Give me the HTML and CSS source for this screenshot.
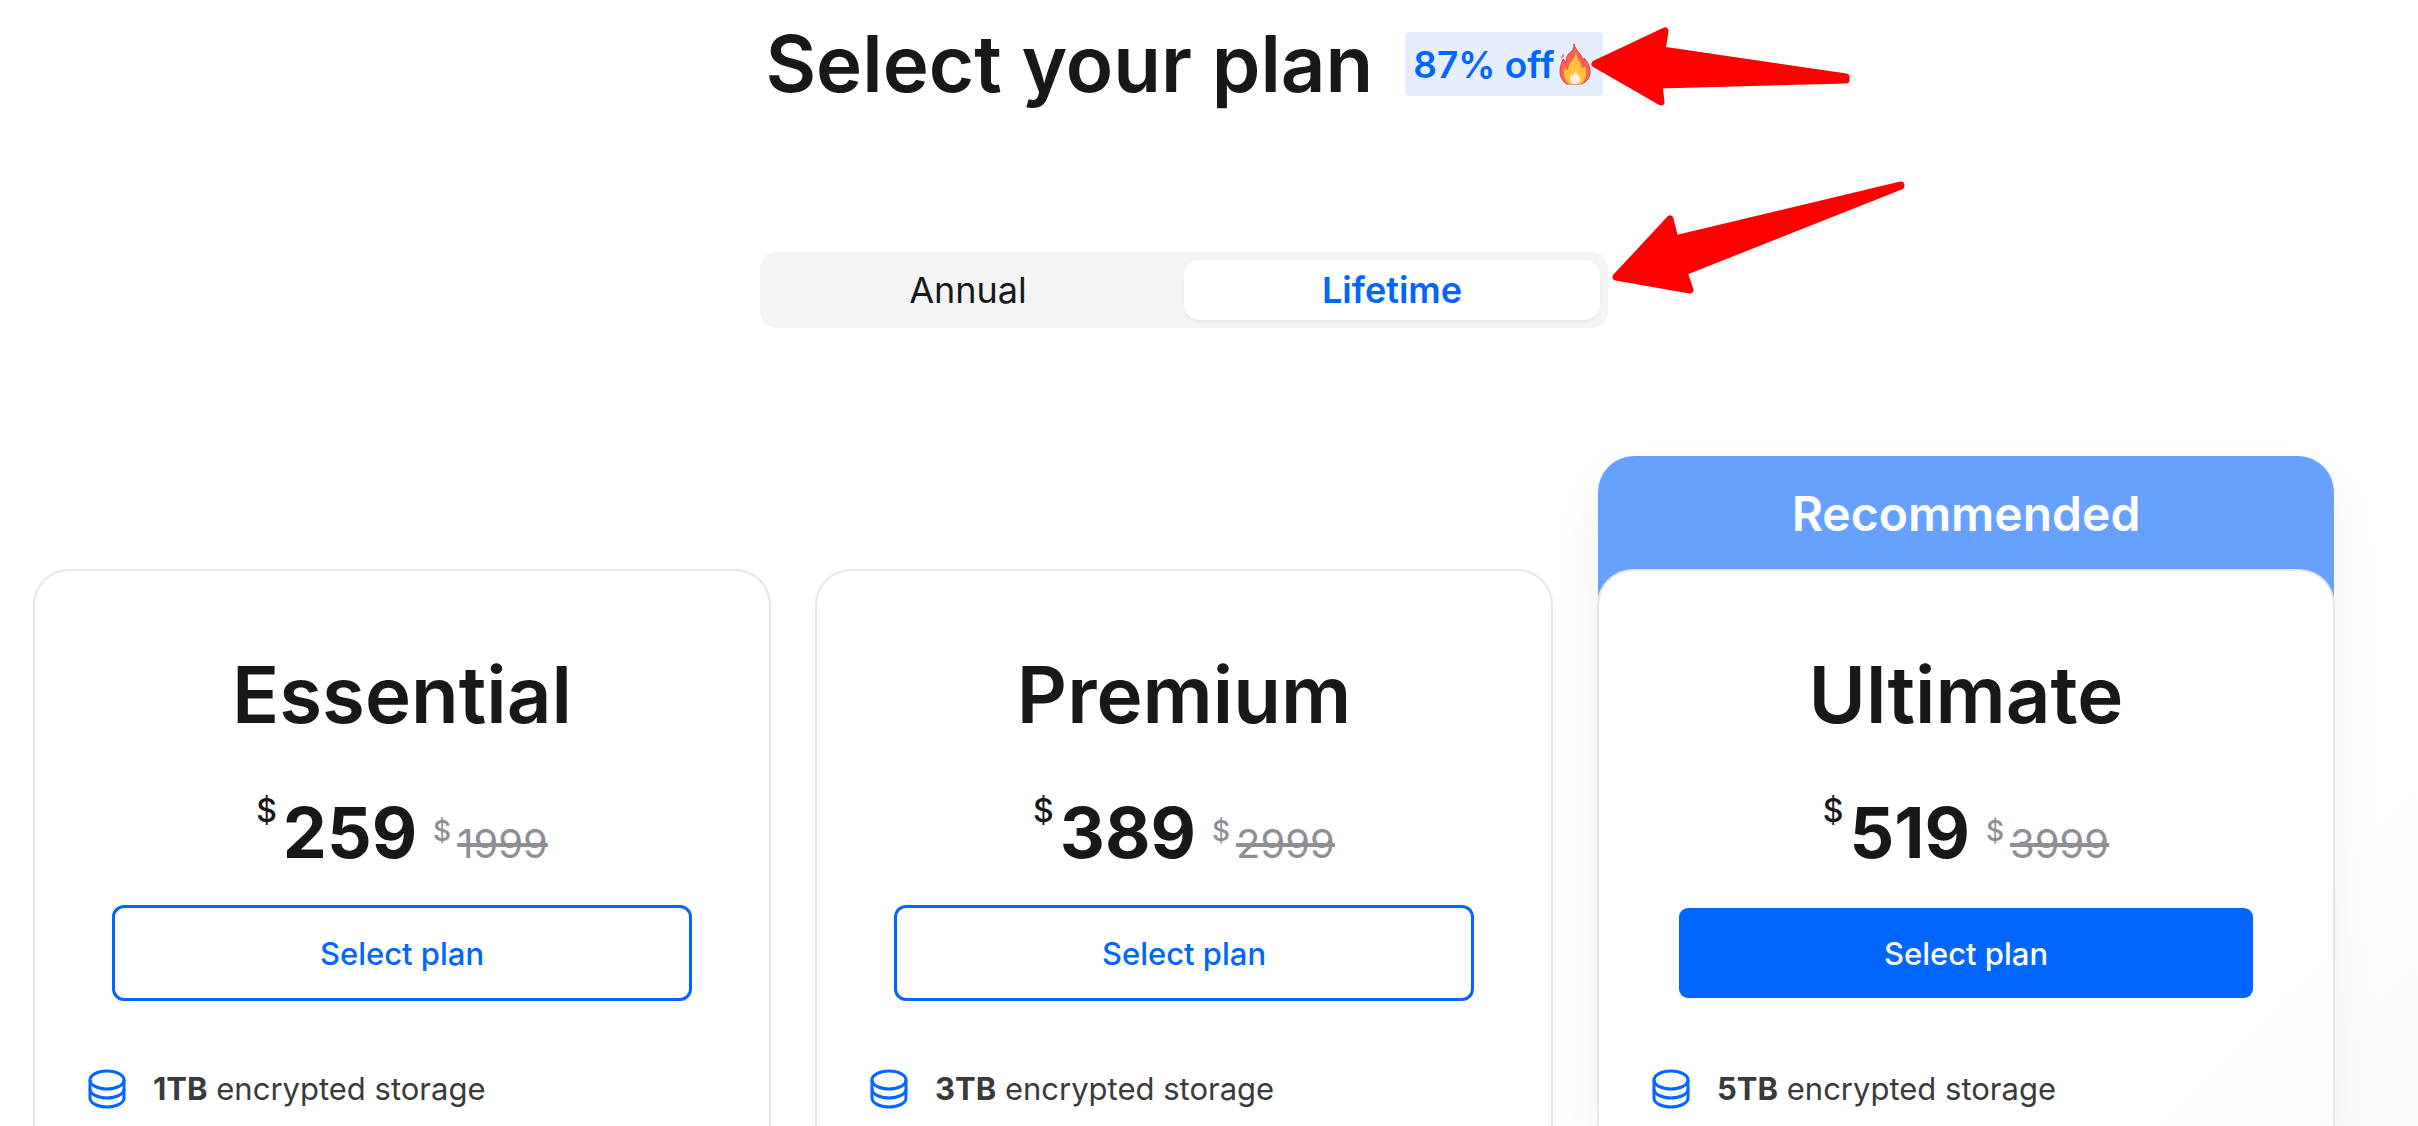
FILE: index.html
```html
<!DOCTYPE html>
<html lang="en">
<head>
    <meta charset="UTF-8">
    <meta name="viewport" content="width=device-width, initial-scale=1.0">
    <title>Select your plan</title>
    <link rel="stylesheet" href="styles.css">
</head>
<body>

    <!-- Shared icon -->
    <svg class="sprite" aria-hidden="true">
        <symbol id="icon-storage" viewBox="0 0 48 48">
            <g fill="none" stroke="currentColor" stroke-width="3">
                <ellipse cx="24" cy="15" rx="17" ry="9"/>
                <path d="M7 15v18c0 5 7.600 9 17 9s17-4 17-9V15"/>
                <path d="M7 24c0 5 7.600 9 17 9s17-4 17-9"/>
            </g>
        </symbol>
    </svg>

    <main class="page">
        <header class="page-header">
            <h1>Select your plan</h1>
            <div class="badge">
                <span>87% off</span>
                <svg class="fire" viewBox="0 0 32 42" aria-hidden="true">
                    <path fill="#ff6250" stroke="#e3342b" stroke-width="1" d="M15 1c1 7 9 10 9 18 0 2 1 1 1-4 4 4 6 9 6 14 0 7-5 11-9 12H8C4 39 1 34 1 28c0-5 2-8 3-12l3 4c0-7 3-10 6-12 2-2 2-5 2-7z"/>
                    <path fill="#ff6250" d="M5 10c-2 2-3 4-3 6 2-1 3-3 3-6z"/>
                    <path fill="#ffc23c" d="M17 9c0 7 6 10 6 17l3-3c3 8 0 15-4 18H10c-5-4-6-11-4-16l3 3c0-9 8-12 8-19z"/>
                    <path fill="#f3f0ec" d="M16 28c1 3 5 4 5 8 0 3-2 5-5 5s-5-2-5-5c0-2 1-4 2-5l1 2c1-1 2-3 2-5z"/>
                </svg>
                <svg class="arrow arrow-badge" viewBox="0 0 262 82" aria-hidden="true">
                    <path d="M6 38L76 5l-3 19 184 27v3L70 59l2 17z"/>
                </svg>
            </div>
        </header>

        <div class="billing-toggle">
            <button type="button" class="toggle-btn">Annual</button>
            <button type="button" class="toggle-btn active">Lifetime</button>
            <svg class="arrow arrow-toggle" viewBox="0 0 296 114" aria-hidden="true">
                <path d="M5 97L59 39l5 20L290 5v1L73 92l6 18z"/>
            </svg>
        </div>

        <section class="plans">
            <article class="plan">
                <div class="plan-card">
                    <h2>Essential</h2>
                    <div class="price">
                        <span class="currency">$</span>
                        <span class="amount">259</span>
                        <span class="currency old">$</span>
                        <s class="old-amount">1999</s>
                    </div>
                    <button type="button" class="select-btn">Select plan</button>
                    <ul class="features">
                        <li>
                            <svg class="icon" aria-hidden="true"><use href="#icon-storage"/></svg>
                            <span><strong>1TB</strong> encrypted storage</span>
                        </li>
                    </ul>
                </div>
            </article>

            <article class="plan">
                <div class="plan-card">
                    <h2>Premium</h2>
                    <div class="price">
                        <span class="currency">$</span>
                        <span class="amount">389</span>
                        <span class="currency old">$</span>
                        <s class="old-amount">2999</s>
                    </div>
                    <button type="button" class="select-btn">Select plan</button>
                    <ul class="features">
                        <li>
                            <svg class="icon" aria-hidden="true"><use href="#icon-storage"/></svg>
                            <span><strong>3TB</strong> encrypted storage</span>
                        </li>
                    </ul>
                </div>
            </article>

            <article class="plan recommended">
                <div class="ribbon">Recommended</div>
                <div class="plan-card">
                    <h2>Ultimate</h2>
                    <div class="price">
                        <span class="currency">$</span>
                        <span class="amount">519</span>
                        <span class="currency old">$</span>
                        <s class="old-amount">3999</s>
                    </div>
                    <button type="button" class="select-btn primary">Select plan</button>
                    <ul class="features">
                        <li>
                            <svg class="icon" aria-hidden="true"><use href="#icon-storage"/></svg>
                            <span><strong>5TB</strong> encrypted storage</span>
                        </li>
                    </ul>
                </div>
            </article>
        </section>
    </main>

</body>
</html>
```
FILE: styles.css
```css
* {
    box-sizing: border-box;
}

body {
    margin: 0;
    background-color: #fff;
    color: #18181b;
    font-family: Inter, "Liberation Sans", sans-serif;
}

h1, h2, ul {
    margin: 0;
    padding: 0;
}

button {
    font-family: inherit;
    cursor: pointer;
}

.sprite {
    display: none;
}

.page {
    display: flex;
    flex-direction: column;
    align-items: center;
    min-height: 100vh;
    padding: 0 83px 0 33px;
    overflow: hidden;
    background: linear-gradient(135deg, #fff 90%, #fafafa);
}

/* Heading and discount badge */
.page-header {
    display: flex;
    align-items: center;
    gap: 32px;
    height: 128px;
}

h1, h2 {
    font-size: 78px;
    font-weight: 600;
    line-height: 96px;
}

.badge {
    position: relative;
    display: flex;
    align-items: center;
    gap: 4px;
    height: 64px;
    padding: 0 12px 0 8px;
    border-radius: 4px;
    background-color: #e5eeff;
    color: #0066ff;
    font-size: 37px;
    font-weight: 600;
}

.fire {
    width: 32px;
    height: 42px;
}

/* Arrows lie over the page and point at the offer */
.arrow {
    position: absolute;
    fill: #ff0000;
    stroke: #ff0000;
    stroke-width: 7;
    stroke-linejoin: round;
    pointer-events: none;
}

.arrow-badge {
    top: -6px;
    left: calc(100% - 14px);
    width: 262px;
    height: 82px;
}

.arrow-toggle {
    bottom: 34px;
    left: calc(100% + 3px);
    width: 296px;
    height: 114px;
}

/* Annual / Lifetime switch */
.billing-toggle {
    position: relative;
    display: flex;
    gap: 8px;
    width: 100%;
    max-width: 848px;
    margin: 124px 0 128px;
    padding: 8px 8px 8px 0;
    border-radius: 16px;
    background-color: #f4f4f4;
}

.toggle-btn {
    flex: 1;
    height: 60px;
    border: none;
    border-radius: 16px;
    background: none;
    color: #18181b;
    font-size: 36px;
}

.toggle-btn.active {
    background-color: #fff;
    box-shadow: 0 2px 4px rgba(0, 0, 0, 0.06);
    color: #0066ff;
    font-weight: 600;
}

/* Plans */
.plans {
    display: grid;
    grid-template-columns: repeat(3, 1fr);
    gap: 44px;
    flex: 1;
    width: 100%;
}

.plan {
    display: flex;
    flex-direction: column;
    padding-top: 113px;
}

.plan-card {
    flex: 1;
    padding: 76px 48px 0;
    border: 2px solid #e5e5eb;
    border-bottom: none;
    border-radius: 36px 36px 0 0;
    background-color: #fff;
    text-align: center;
}

.recommended {
    padding-top: 0;
    border-radius: 36px 36px 0 0;
    box-shadow: 0 24px 48px rgba(0, 0, 0, 0.06);
}

.recommended .plan-card {
    margin-top: -32px;
    background: linear-gradient(135deg, #fff 85%, #fcfcfc);
}

.ribbon {
    height: 145px;
    margin: 0 1px;
    border-radius: 36px 36px 0 0;
    background-color: #67a1ff;
    color: #fff;
    font-size: 48px;
    font-weight: 600;
    line-height: 116px;
    text-align: center;
}

.price {
    display: flex;
    justify-content: center;
    height: 88px;
    margin: 46px 0 28px;
}

.currency {
    margin-right: 6px;
    font-size: 32px;
    font-weight: 500;
    line-height: 44px;
}

.amount {
    margin-right: 16px;
    font-size: 70px;
    font-weight: 700;
    line-height: 88px;
}

.currency.old {
    margin-top: 20px;
    font-size: 28px;
}

.old-amount {
    align-self: flex-end;
    font-size: 40px;
    line-height: 66px;
}

.old, .old-amount {
    color: #8e8e94;
}

.select-btn {
    display: block;
    width: calc(100% - 58px);
    height: 96px;
    margin: 0 auto 64px;
    border: 3px solid #0066ff;
    border-radius: 12px;
    background-color: #fff;
    color: #0066ff;
    font-size: 31px;
    font-weight: 500;
}

.select-btn.primary {
    border-color: transparent;
    background-color: #0066ff;
    background-clip: padding-box;
    color: #fff;
}

.features {
    list-style: none;
}

.features li {
    display: flex;
    align-items: center;
    gap: 22px;
    color: #3a3a3b;
    font-size: 31px;
    line-height: 48px;
}

.icon {
    width: 48px;
    height: 48px;
    color: #0066ff;
}
```
